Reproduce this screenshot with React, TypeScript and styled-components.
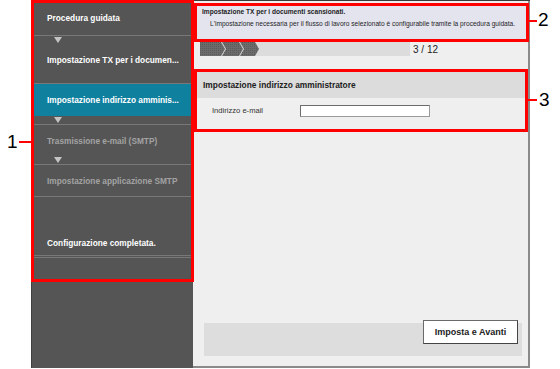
import React from 'react';
import styled, { createGlobalStyle } from 'styled-components';

const GlobalStyle = createGlobalStyle`
	html, body {
		margin: 0;
		padding: 0;
		background: #ffffff;
		font-family: 'Liberation Sans', Arial, sans-serif;
	}
`;

const Page = styled.div`
	position: relative;
	width: 560px;
	height: 369px;
	padding-left: 31px;
	box-sizing: border-box;
	overflow: hidden;
`;

const Screen = styled.div`
	display: flex;
	width: 499px;
	height: 368px;
	border-top: 1px solid #3c3c3c;
	box-sizing: border-box;
`;

const Sidebar = styled.div`
	display: flex;
	flex-direction: column;
	width: 162px;
	flex-shrink: 0;
	background: #555555;
	border-left: 1px solid #404040;
	box-sizing: border-box;
`;

const StepRow = styled.div<{ $h: number; $active?: boolean; $disabled?: boolean }>`
	display: flex;
	align-items: center;
	height: ${(p) => p.$h}px;
	padding-left: 15px;
	background: ${(p) => (p.$active ? '#10809f' : 'transparent')};
	color: ${(p) => (p.$disabled ? '#a3a3a3' : '#ffffff')};
	font-size: 8.3px;
	font-weight: 700;
	white-space: nowrap;
`;

const Divider = styled.div`
	height: 1px;
	background: #787878;
`;

const Gap = styled.div<{ $h: number }>`
	height: ${(p) => p.$h}px;
`;

const ArrowRow = styled.div`
	height: 8px;
	padding: 1px 0 0 22px;
	box-sizing: border-box;
`;

const Arrow = styled.div`
	width: 0;
	height: 0;
	border-left: 4px solid transparent;
	border-right: 4px solid transparent;
	border-top: 6px solid #c4c4c4;
`;

const Main = styled.div`
	display: flex;
	flex-direction: column;
	flex: 1;
	background: #efefef;
	border-right: 2px solid #8a8a8a;
	border-bottom: 2px solid #8a8a8a;
	box-sizing: border-box;
`;

const HeaderBox = styled.div`
	height: 35px;
	margin: 4px 1px 0 3px;
	padding: 1px 6px;
	background: #e4e4ef;
	box-sizing: border-box;
	font-size: 6.6px;
	line-height: 12px;
	color: #1e1e1e;
`;

const HeaderTitle = styled.div`
	font-weight: 700;
`;

const HeaderDesc = styled.div`
	padding-left: 8px;
	white-space: nowrap;
`;

const ProgressRow = styled.div`
	display: flex;
	align-items: center;
	height: 14px;
	margin: 2px 0 0 7px;
`;

const ProgressBar = styled.div`
	display: flex;
	align-items: center;
	width: 210px;
	height: 14px;
	background: #dcdcdc;
`;

const StepCount = styled.span`
	margin-left: 3px;
	font-size: 10px;
	color: #1e1e1e;
`;

const Section = styled.div`
	margin: 16px 3px 0 4px;
`;

const SectionHead = styled.div`
	display: flex;
	align-items: center;
	height: 26px;
	padding-left: 6px;
	background: #dcdcdc;
	font-size: 8.4px;
	font-weight: 700;
	color: #222222;
`;

const SectionBody = styled.div`
	display: flex;
	align-items: flex-start;
	height: 31px;
	padding: 7px 0 0 15px;
	box-sizing: border-box;
`;

const FieldLabel = styled.label`
	width: 88px;
	font-size: 7.6px;
	line-height: 12px;
	color: #333333;
`;

const TextInput = styled.input`
	width: 130px;
	height: 12px;
	margin: 0;
	padding: 0;
	box-sizing: border-box;
	background: #ffffff;
	border: 1px solid #9a9a9a;
	border-top-color: #6c6c6c;
	border-left-color: #6c6c6c;
	outline: none;
`;

const ButtonBar = styled.div`
	display: flex;
	justify-content: flex-end;
	align-items: flex-start;
	height: 33px;
	margin: auto 6px 10px 11px;
	padding-right: 4px;
	background: #dddddd;
`;

const ActionButton = styled.button`
	width: 95px;
	height: 24px;
	margin-top: -3px;
	background: #ffffff;
	border: 1px solid #6a6a6a;
	border-right-color: #444444;
	border-bottom-color: #444444;
	font-family: 'Liberation Sans', Arial, sans-serif;
	font-size: 9px;
	font-weight: 700;
	color: #222222;
	padding: 0;
`;

const RedFrame = styled.div<{ $x: number; $y: number; $w: number; $h: number }>`
	position: absolute;
	left: ${(p) => p.$x}px;
	top: ${(p) => p.$y}px;
	width: ${(p) => p.$w}px;
	height: ${(p) => p.$h}px;
	border: 3px solid #ff0000;
	box-sizing: border-box;
	pointer-events: none;
`;

const CalloutLine = styled.div<{ $x: number; $y: number; $w: number }>`
	position: absolute;
	left: ${(p) => p.$x}px;
	top: ${(p) => p.$y}px;
	width: ${(p) => p.$w}px;
	height: 2px;
	background: #ff0000;
`;

const CalloutNum = styled.span<{ $x: number; $y: number }>`
	position: absolute;
	left: ${(p) => p.$x}px;
	top: ${(p) => p.$y}px;
	font-size: 19px;
	line-height: 19px;
	font-weight: 400;
	color: #000000;
`;

function Chevrons() {
	return (
		<svg width="60" height="14" viewBox="0 0 60 14" xmlns="http://www.w3.org/2000/svg">
			<defs>
				<pattern id="dots" width="2" height="2" patternUnits="userSpaceOnUse">
					<rect width="2" height="2" fill="#6c6c6c" />
					<rect width="1" height="1" fill="#5a5a5a" />
				</pattern>
			</defs>
			<polygon points="0,0 21,0 25,7 21,14 0,14" fill="url(#dots)" />
			<polygon points="22,0 39,0 43,7 39,14 22,14 26,7" fill="url(#dots)" />
			<polygon points="40,0 55,0 59,7 55,14 40,14 44,7" fill="url(#dots)" />
		</svg>
	);
}

function App() {
	return (
		<Page>
			<GlobalStyle />
			<Screen>
				<Sidebar>
					<StepRow $h={34}>Procedura guidata</StepRow>
					<Divider />
					<ArrowRow>
						<Arrow />
					</ArrowRow>
					<StepRow $h={32}>Impostazione TX per i documen...</StepRow>
					<Gap $h={7} />
					<Divider />
					<StepRow $h={32} $active>
						Impostazione indirizzo amminis...
					</StepRow>
					<ArrowRow>
						<Arrow />
					</ArrowRow>
					<Divider />
					<StepRow $h={31} $disabled>
						Trasmissione e-mail (SMTP)
					</StepRow>
					<ArrowRow>
						<Arrow />
					</ArrowRow>
					<Divider />
					<StepRow $h={31} $disabled>
						Impostazione applicazione SMTP
					</StepRow>
					<Divider />
					<Gap $h={33} />
					<StepRow $h={25}>Configurazione completata.</StepRow>
					<Divider />
					<Gap $h={1} />
					<Divider />
				</Sidebar>
				<Main>
					<HeaderBox>
						<HeaderTitle>Impostazione TX per i documenti scansionati.</HeaderTitle>
						<HeaderDesc>
							L'impostazione necessaria per il flusso di lavoro selezionato è configurabile tramite la procedura guidata.
						</HeaderDesc>
					</HeaderBox>
					<ProgressRow>
						<ProgressBar>
							<Chevrons />
						</ProgressBar>
						<StepCount>3 / 12</StepCount>
					</ProgressRow>
					<Section>
						<SectionHead>Impostazione indirizzo amministratore</SectionHead>
						<SectionBody>
							<FieldLabel>Indirizzo e-mail</FieldLabel>
							<TextInput type="text" />
						</SectionBody>
					</Section>
					<ButtonBar>
						<ActionButton>Imposta e Avanti</ActionButton>
					</ButtonBar>
				</Main>
			</Screen>

			<RedFrame $x={31} $y={0} $w={163} $h={282} />
			<RedFrame $x={194} $y={3} $w={335} $h={39} />
			<RedFrame $x={194} $y={69} $w={334} $h={63} />

			<CalloutLine $x={19} $y={141} $w={12} />
			<CalloutNum $x={7} $y={132}>1</CalloutNum>
			<CalloutLine $x={528} $y={20} $w={9} />
			<CalloutNum $x={538} $y={10}>2</CalloutNum>
			<CalloutLine $x={528} $y={99} $w={9} />
			<CalloutNum $x={539} $y={90}>3</CalloutNum>
		</Page>
	);
}

export default App;
